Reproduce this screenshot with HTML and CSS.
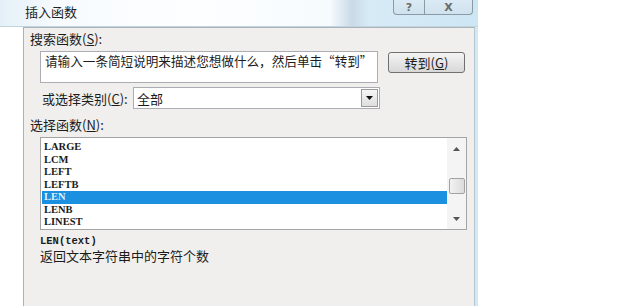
FILE: index.html
```html
<!DOCTYPE html>
<html lang="zh-CN">
<head>
    <meta charset="UTF-8">
    <title>插入函数</title>
    <link rel="stylesheet" href="styles.css">
</head>
<body>
    <div class="window">
        <div class="titlebar">
            <span class="title">插入函数</span>
            <div class="caption-btns">
                <span class="cap-btn help">?</span>
                <span class="cap-btn close">X</span>
            </div>
        </div>
        <div class="frame">
            <div class="dialog">
                <div class="label">搜索函数(<u>S</u>):</div>
                <div class="search-row">
                    <div class="search-box">请输入一条简短说明来描述您想做什么，然后单击“转到”</div>
                    <button class="go-btn">转到(<u>G</u>)</button>
                </div>
                <div class="category-row">
                    <span class="cat-label">或选择类别(<u>C</u>):</span>
                    <div class="select">
                        <span class="select-value">全部</span>
                        <span class="select-arrow">
                            <svg width="7" height="4" viewBox="0 0 7 4"><path d="M0 0h7L3.5 4z" fill="#111"/></svg>
                        </span>
                    </div>
                </div>
                <div class="label label-fn">选择函数(<u>N</u>):</div>
                <div class="listbox">
                    <ul class="items">
                        <li>LARGE</li>
                        <li>LCM</li>
                        <li>LEFT</li>
                        <li>LEFTB</li>
                        <li class="selected">LEN</li>
                        <li>LENB</li>
                        <li>LINEST</li>
                    </ul>
                    <div class="scrollbar">
                        <svg class="arrow" width="7" height="4" viewBox="0 0 7 4"><path d="M0 4h7L3.5 0z" fill="#555"/></svg>
                        <div class="thumb"></div>
                        <svg class="arrow down" width="7" height="4" viewBox="0 0 7 4"><path d="M0 0h7L3.5 4z" fill="#555"/></svg>
                    </div>
                </div>
                <div class="signature">LEN(text)</div>
                <div class="desc">返回文本字符串中的字符个数</div>
            </div>
        </div>
    </div>
</body>
</html>
```

FILE: styles.css
```css
* {
    margin: 0;
    padding: 0;
    box-sizing: border-box;
}

body {
    background-color: #fff;
    font-family: "Noto Sans CJK SC", "Liberation Sans", sans-serif;
    font-size: 13px;
    color: #1c1c1c;
    overflow: hidden;
}

.window {
    width: 478px;
    height: 306px;
}

/* title bar */
.titlebar {
    height: 27px;
    display: flex;
    align-items: flex-start;
    justify-content: space-between;
    background: linear-gradient(90deg, #e4f0f8 0, #f7fbfe 60px, #fdfeff 200px, #f6fbfe 330px, #c9dae6 352px, #d7ebf6 370px, #cde6f4 478px);
    border-bottom: 1px solid #c4d4de;
}

.title {
    margin: 4px 0 0 25px;
    font-size: 13px;
    line-height: 16px;
    color: #222;
}

.caption-btns {
    display: flex;
    margin-right: 5px;
}

.cap-btn {
    height: 15px;
    display: flex;
    align-items: center;
    justify-content: center;
    border: 1px solid #8b9aa6;
    border-top: none;
    background: linear-gradient(#dbeaf4, #cfe2ee);
    color: #6b6b6b;
    font-family: "DejaVu Sans", sans-serif;
    font-size: 11px;
    font-weight: bold;
}

.help {
    width: 32px;
    border-radius: 0 0 0 4px;
}

.close {
    width: 48px;
    border-left: none;
    border-radius: 0 0 4px 0;
}

/* frame + dialog */
.frame {
    display: flex;
    height: 279px;
    padding-left: 23px;
}

.dialog {
    width: 452px;
    background-color: #f0efed;
    border: 1px solid #a9b3ba;
    border-bottom: none;
    border-right: 1px solid #b7c6cf;
    box-shadow: 3px 0 0 #d2e8f4;
    padding-left: 6px;
}

.label {
    margin-top: 4px;
    line-height: 14px;
}

.search-row {
    display: flex;
    align-items: flex-start;
    margin-top: 5px;
    margin-left: 10px;
}

.search-box {
    width: 338px;
    height: 32px;
    background: #fff;
    border: 1px solid #abadb3;
    padding: 1px 0 0 4px;
    line-height: 16px;
    font-size: 12.6px;
    white-space: nowrap;
}

.go-btn {
    width: 77px;
    height: 21px;
    margin: 1px 0 0 10px;
    border: 1px solid #707070;
    border-radius: 3px;
    background: linear-gradient(#f4f4f4, #e6e6e6 50%, #d8d8d8);
    font-family: inherit;
    font-size: 13px;
    color: #1c1c1c;
}

.category-row {
    display: flex;
    align-items: center;
    margin-top: 4px;
    margin-left: 12px;
}

.cat-label {
    width: 91px;
}

.select {
    width: 247px;
    height: 22px;
    display: flex;
    align-items: center;
    justify-content: space-between;
    background: #fff;
    border: 1px solid #abadb3;
    padding-left: 3px;
}

.select-arrow {
    width: 17px;
    height: 18px;
    margin-right: 1px;
    display: flex;
    align-items: center;
    justify-content: center;
    border: 1px solid #9a9a9a;
    background: linear-gradient(#f6f6f6, #dedede);
}

.label-fn {
    margin-top: 9px;
}

/* function list */
.listbox {
    display: flex;
    width: 427px;
    height: 93px;
    margin: 5px 0 0 10px;
    background: #fff;
    border: 1px solid #a4a4a4;
}

.items {
    flex: 1;
    list-style: none;
    padding: 3px 0 0 1px;
    font-family: "Liberation Serif", serif;
    font-weight: bold;
    font-size: 10.5px;
    color: #1a1a1a;
}

.items li {
    height: 12.5px;
    line-height: 12.5px;
    padding-left: 2px;
}

.items li.selected {
    background-color: #1b8fe0;
    color: #dff1ff;
}

.scrollbar {
    width: 19px;
    display: flex;
    flex-direction: column;
    align-items: center;
    background: #f4f4f4;
}

.scrollbar .arrow {
    margin-top: 9px;
}

.thumb {
    width: 16px;
    height: 16px;
    margin-top: 27px;
    border: 1px solid #a2a2a2;
    border-radius: 2px;
    background: linear-gradient(90deg, #f2f2f2, #dcdcdc);
}

.scrollbar .arrow.down {
    margin-top: 23px;
}

.signature {
    margin: 4px 0 0 10px;
    line-height: 14px;
    font-family: "Liberation Mono", monospace;
    font-weight: bold;
    font-size: 10.5px;
}

.desc {
    margin-left: 10px;
    line-height: 16px;
    font-size: 13px;
}
```
